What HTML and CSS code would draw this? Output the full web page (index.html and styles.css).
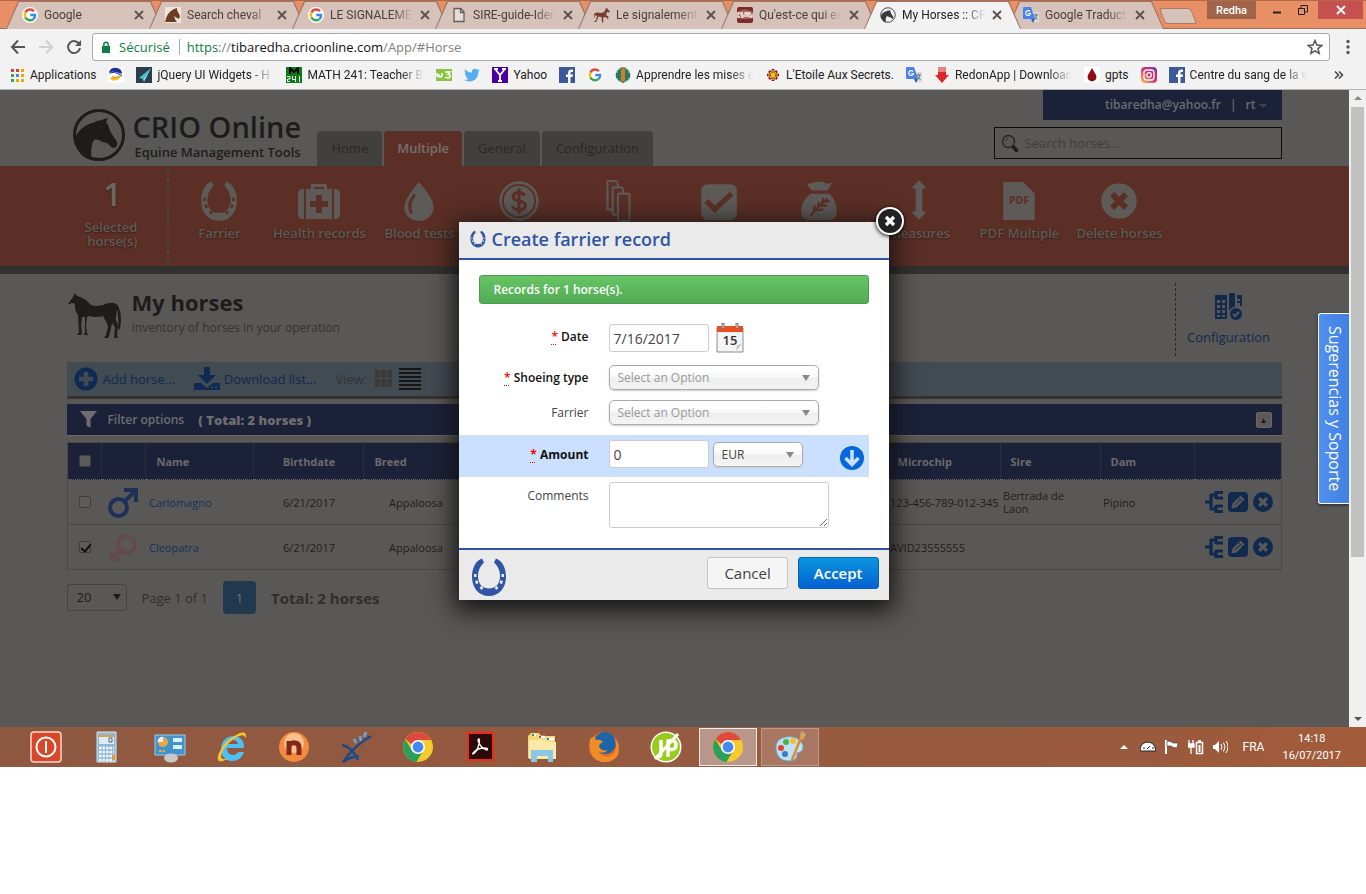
FILE: index.html
```html
<!DOCTYPE html>
<html lang="en">
<head>
<meta charset="utf-8">
<title>My Horses :: CRIO Online</title>
<link rel="stylesheet" href="styles.css">
</head>
<body>
<svg class="sprite" aria-hidden="true">
  <symbol id="google" viewBox="0 0 16 16"><circle cx="8" cy="8" r="8" fill="#fff"/><g fill="none" stroke-width="2.4"><path d="M12 4.2A5.3 5.3 0 0 0 3.4 5.4" stroke="#ea4335"/><path d="M3.4 5.4a5.4 5.4 0 0 0 0 5.2" stroke="#fbbc05"/><path d="M3.4 10.600a5.300 5.300 0 0 0 8 1.500" stroke="#34a853"/><path d="M11.400 12.100A5 5 0 0 0 13.100 8H8.200" stroke="#4285f4"/></g></symbol>
  <symbol id="translate" viewBox="0 0 16 16"><path d="M6 5h10v10H9z" fill="#dcdcdc"/><path d="M1 0h7l4 12H1a1 1 0 0 1-1-1V1a1 1 0 0 1 1-1z" fill="#4a80ef"/><path d="M8 12h4l-2 4z" fill="#2a56c6"/><path d="M7 4.500a2.400 2.400 0 1 0 .5 2H5.200" fill="none" stroke="#fff" stroke-width="1.200"/><path d="M10 8h5M12.500 6.500V8M14 8q-1 4-3.500 5M11.500 9.500l3 3.500" stroke="#66767c" fill="none"/></symbol>
  <symbol id="fb" viewBox="0 0 16 16"><path fill="#3b5998" d="M0 0h16v16H0z"/><path d="M9 16v-6H7V7.500h2V6q0-3.500 3.500-3.500H14V5h-1.300Q11.500 5 11.500 6v1.500H14L13.600 10h-2.100v6z" fill="#fff"/></symbol>
  <symbol id="chrome" viewBox="0 0 32 32"><circle cx="16" cy="16" r="15" fill="#f7c92c"/><path d="M16 1a15 15 0 0 1 13 8H16L9 13 3.500 8A15 15 0 0 1 16 1z" fill="#dd4b3e"/><path d="M3.200 8.200A15 15 0 0 0 14.500 31L21 20l-10 1z" fill="#2ca05a"/><circle cx="16" cy="16" r="7" fill="#fff"/><circle cx="16" cy="16" r="5.400" fill="#4688f1"/></symbol>
  <symbol id="horsehead" viewBox="0 0 54 54"><circle cx="27" cy="27" r="24.500" fill="none" stroke="currentColor" stroke-width="3"/><path d="M3 31C5 23 12 17 22 14.500c4-2.500 8-2 10-3.500l4-1-2 4c2 2 3 5 4 9l7 11c1 3-1 6-4 6-3-1-4-4-6-5-3-1-6-1-8-3-2 0-4-1-5 0-3 4-3 11-2.500 20C10 50 4 42 3 31z" fill="currentColor"/></symbol>
  <symbol id="shoe" viewBox="0 0 36 40"><path d="M11 1.500C4 4 1 12 1 20c0 11 7 19 17 19s17-8 17-19c0-8-3-16-10-18.500l-2 4c4 4 6 8 6 14 0 7-4 12-11 12S7 26.500 7 19.500c0-6 2-10 6-14z" fill="currentColor"/><g class="nails"><path d="M3 17h2.500v3H3zM30.500 17H33v3h-2.500zM4 24l2.500-.8 1 3L5 27zM32 24l-2.500-.8-1 3L31 27zM8.500 30.500l2-1.500 2 2-2 2zM27.500 30.500l-2-1.500-2 2 2 2z"/></g></symbol>
  <symbol id="xmark" viewBox="0 0 12 12"><path d="M2 2l8 8M10 2l-8 8" stroke="currentColor" stroke-width="1.800" fill="none"/></symbol>
  <symbol id="xcircle" viewBox="0 0 36 36"><circle cx="18" cy="18" r="18" fill="currentColor"/><path class="cut" d="M11 11l14 14M25 11L11 25" stroke-width="6"/></symbol>
  <symbol id="tree" viewBox="0 0 18 24"><path d="M0 12h6M6 4v16M5 5h6M5 19h6M11 1v8M11 15v8M18 2.500h-7M18 8h-7M18 16h-7M18 21.500h-7" stroke="currentColor" stroke-width="3.200" fill="none"/></symbol>
  <symbol id="edit" viewBox="0 0 20 20"><rect width="20" height="20" rx="4" fill="currentColor"/><path class="cutfill" d="M3.500 16.500l1-5 8-8 4 4-8 8z"/><path d="M7 13l6-6M10.500 5.500l4 4" stroke="currentColor"/></symbol>
</svg>

<div class="desktop">
<section class="browser">
  <header class="tabstrip">
    <nav class="tabs" aria-label="Open tabs">
      <div class="tab"><svg class="fav"><use href="#google"/></svg><span class="tab-title">Google</span><button class="tab-close" aria-label="Close tab"><svg><use href="#xmark"/></svg></button></div>
      <div class="tab"><svg class="fav" viewBox="0 0 16 16"><path fill="#eee4dc" d="M0 0h16v16H0z"/><path d="M0 15Q2 5 9 2l3-1v2l3 6-1 3-2-1-3-2q1 4 3 6z" fill="#6b3d24"/></svg><span class="tab-title">Search cheval</span><button class="tab-close" aria-label="Close tab"><svg><use href="#xmark"/></svg></button></div>
      <div class="tab"><svg class="fav"><use href="#google"/></svg><span class="tab-title">LE SIGNALEMENT</span><button class="tab-close" aria-label="Close tab"><svg><use href="#xmark"/></svg></button></div>
      <div class="tab"><svg class="fav" viewBox="0 0 16 16"><path d="M3 1.500h7l3 3.500v9.500H3zM9.500 1.500V5.500H13" fill="#e6dcd7" stroke="#655e5b" stroke-width="1.300"/></svg><span class="tab-title">SIRE-guide-Iden</span><button class="tab-close" aria-label="Close tab"><svg><use href="#xmark"/></svg></button></div>
      <div class="tab"><svg class="fav" viewBox="0 0 16 16"><path d="M0 15l2-2 1-4-2-1-1 4-.5-4Q1 5 4 5.500q3 1 6-.5l2-3.500L13 .5l.5 1.500L16 4.500l-1 1-2-.5-1 3 2.500 1.500-.5 3-1.500-2-2.500-.5-1 1 .5 4-1.500.5-.5-5.500-3-.5-2 5-1 .5z" fill="#793c35"/></svg><span class="tab-title">Le signalement</span><button class="tab-close" aria-label="Close tab"><svg><use href="#xmark"/></svg></button></div>
      <div class="tab"><svg class="fav" viewBox="0 0 16 16"><rect width="16" height="16" rx="2" fill="#7d2b27"/><path d="M0 5q8-5 16 0v6q-8 2-16 0z" fill="#a46a62"/><path d="M3 6H1v4h2M6 6H4v2h2v2H4M8 10V6h2v4M11 10V6h2v4h2V7" fill="none" stroke="#f6e9e5" stroke-width="1.300"/></svg><span class="tab-title">Qu'est-ce qui es</span><button class="tab-close" aria-label="Close tab"><svg><use href="#xmark"/></svg></button></div>
      <div class="tab active"><svg class="fav dark"><use href="#horsehead"/></svg><span class="tab-title">My Horses :: CR</span><button class="tab-close" aria-label="Close tab"><svg><use href="#xmark"/></svg></button></div>
      <div class="tab"><svg class="fav"><use href="#translate"/></svg><span class="tab-title">Google Traduct</span><button class="tab-close" aria-label="Close tab"><svg><use href="#xmark"/></svg></button></div>
      <button class="newtab" aria-label="New tab"></button>
    </nav>
    <div class="winctl">
      <button class="profile">Redha</button>
      <button class="wbtn" aria-label="Minimise"><svg viewBox="0 0 10 10"><path d="M1 7.500h8" stroke="#222" stroke-width="2"/></svg></button>
      <button class="wbtn" aria-label="Restore"><svg viewBox="0 0 10 10"><path d="M.5 3.500h6v6h-6zM3 3V.5h6.500V7H7" fill="none" stroke="#222"/><path d="M0 3.500h7" stroke="#222"/></svg></button>
      <button class="wclose" aria-label="Close window"><svg viewBox="0 0 12 12"><use href="#xmark"/></svg></button>
    </div>
  </header>
  <div class="toolbar">
    <button class="nav" aria-label="Back"><svg viewBox="0 0 16 16"><path d="M8 1.500L2 8l6 6.500M2 8h13" stroke="#555" stroke-width="2" fill="none"/></svg></button>
    <button class="nav" aria-label="Forward"><svg viewBox="0 0 16 16"><path d="M8 1.500L14 8l-6 6.500M14 8H1" stroke="#d0d0d0" stroke-width="2" fill="none"/></svg></button>
    <button class="nav" aria-label="Reload"><svg viewBox="0 0 16 16"><path d="M13.500 5.500A6 6 0 1 0 14 9" stroke="#555" stroke-width="2" fill="none"/><path d="M15 1v6H9z" fill="#555"/></svg></button>
    <div class="omnibox">
      <svg class="lock" viewBox="0 0 10 12"><path d="M1 5h8v7H1z" fill="#0b8043"/><path d="M2.800 5V3.500a2.200 2.200 0 0 1 4.400 0V5" fill="none" stroke="#0b8043" stroke-width="1.400"/></svg>
      <span class="secure">Sécurisé</span>
      <span class="url"><span class="green">https</span>://<b>tibaredha.crioonline.com</b>/App/#Horse</span>
      <svg class="star" viewBox="0 0 16 16"><path d="M8 1.500l1.900 4.600 4.800.4-3.700 3.100 1.200 4.800L8 11.800l-4.200 2.600L5 9.600 1.300 6.500l4.800-.4z" fill="none" stroke="#555" stroke-width="1.500"/></svg>
    </div>
    <button class="nav menu" aria-label="Menu"><svg viewBox="0 0 16 16"><g fill="#555"><circle cx="8" cy="2.500" r="1.700"/><circle cx="8" cy="8" r="1.700"/><circle cx="8" cy="13.500" r="1.700"/></g></svg></button>
  </div>
  <nav class="bookmarks" aria-label="Bookmarks">
    <a href="#"><svg class="fav" viewBox="0 0 16 16"><path d="M2 2h3v3H2zM7 2h3v3H7z" fill="#e53935"/><path d="M12 2h3v3h-3zM12 7h3v3h-3zM7 12h3v3H7zM12 12h3v3h-3z" fill="#f2a600"/><path d="M2 7h3v3H2zM2 12h3v3H2z" fill="#34a853"/><path d="M7 7h3v3H7z" fill="#4285f4"/></svg>Applications</a>
    <a href="#" aria-label="Bookmark"><svg class="fav" viewBox="0 0 16 16"><path fill="#fff" d="M0 0h16v16H0z"/><path d="M1 5Q3 0 9 1q5 1 5 6l-3-1Q7 4 1 5z" fill="#1b2fa0"/><path d="M1 6q6-2 10 1l3 2" stroke="#1b2fa0" fill="none"/><path d="M2 12q5 4 10-1l1-2q-4 4-10 1z" fill="#f4c81e"/><path d="M4 10q4 2 8-1" stroke="#e9a030" fill="none" stroke-width="2"/></svg></a>
    <a href="#" class="clip"><svg class="fav" viewBox="0 0 16 16"><path fill="#2d3c4f" d="M0 0h16v16H0z"/><path d="M15 1L3 11l4 1z" fill="#39cdb6"/><path d="M15 1L8 15l-1-3z" fill="#7fd7f5"/></svg><span>jQuery UI Widgets - H</span></a>
    <a href="#" class="clip"><svg class="fav" viewBox="0 0 16 16"><path fill="#0a7d16" d="M0 0h16v16H0z"/><path d="M4 7V1l4 4 4-4v6" stroke="#000" stroke-width="2" fill="none"/><path d="M1 9.500h3v2.500H1.500V14.500H4M6.500 9v3.500H10M9.500 9v6M13.500 9v6" stroke="#fff" fill="none"/></svg><span>MATH 241: Teacher Bi</span></a>
    <a href="#" aria-label="w3"><svg class="fav" viewBox="0 0 16 16"><path fill="#8ac53f" d="M0 2h16v12H0z"/><path d="M1 6v3q1 2 2 0V7v2q1 2 3 0V6M9 5h5l-2 2.500q3 0 2 2.500-2 2-5 0" stroke="#fff" stroke-width="1.500" fill="none"/></svg></a>
    <a href="#" aria-label="Twitter"><svg class="fav" viewBox="0 0 16 16"><path d="M0 13q3 0 4.500-1.300Q2.200 11.500 1.700 9.500h1.200Q.8 8.800.7 6.200l1.400.4Q0 5 1.200 2.200 4 5.500 8 5.600 7.500 2 11 1.800q1.300 0 2.300 1L15.300 2l-1.200 1.800 1.700-.4-1.500 1.600Q14.500 10 10.800 12.800 6 16 0 13z" fill="#55acee"/></svg></a>
    <a href="#"><svg class="fav" viewBox="0 0 16 16"><path fill="#4a00a0" d="M0 0h16v16H0z"/><path d="M3 2l5 6 5-6M8 8v6M2 2h4M10 2h4M6 14h4" stroke="#fff" stroke-width="1.800" fill="none"/></svg>Yahoo</a>
    <a href="#" aria-label="Facebook"><svg class="fav"><use href="#fb"/></svg></a>
    <a href="#" aria-label="Google"><svg class="fav"><use href="#google"/></svg></a>
    <a href="#" class="clip"><svg class="fav" viewBox="0 0 16 16"><circle cx="8" cy="8" r="7.500" fill="#58b894"/><path d="M4 3v10M12 3v10M2 6v5M14 6v5" stroke="#1f5f53" stroke-width="1.500"/><path d="M5.500 1h5v12L8 16l-2.500-3z" fill="#b08a44" stroke="#6d4c24" stroke-width=".8"/></svg><span>Apprendre les mises e</span></a>
    <a href="#"><svg class="fav" viewBox="0 0 16 16"><path d="M8 2v12M2 8h12M4 4l8 8M12 4l-8 8" stroke="#8a1010" stroke-width="2.600"/><path d="M8 3v10M3 8h10M5 5l6 6M11 5l-6 6" stroke="#f5d020" stroke-width="1.200"/></svg>L'Etoile Aux Secrets.</a>
    <a href="#" aria-label="Translate"><svg class="fav"><use href="#translate"/></svg></a>
    <a href="#" class="clip"><svg class="fav" viewBox="0 0 16 16"><path d="M4 0h8v8h3l-7 8-7-8h3z" fill="#d9272a"/><path d="M4 0h8v5H4z" fill="#e98183"/></svg><span>RedonApp | Downloac</span></a>
    <a href="#"><svg class="fav" viewBox="0 0 16 16"><path fill="#fff" d="M0 0h16v16H0z"/><path d="M8 1l4 7q2 5-4 6.500Q2 13 4 8z" fill="#8d0d12"/></svg>gpts</a>
    <a href="#" aria-label="Instagram"><svg class="fav" viewBox="0 0 16 16"><defs><linearGradient id="ig" x1="0" y1="1" x2="1" y2="0"><stop offset="0" stop-color="#fdc84b"/><stop offset=".5" stop-color="#e1306c"/><stop offset="1" stop-color="#7232bd"/></linearGradient></defs><rect width="16" height="16" rx="4" fill="url(#ig)"/><rect x="3" y="3" width="10" height="10" rx="3" fill="none" stroke="#fff" stroke-width="1.300"/><circle cx="8" cy="8" r="2.300" fill="none" stroke="#fff" stroke-width="1.300"/></svg></a>
    <a href="#" class="clip"><svg class="fav"><use href="#fb"/></svg><span>Centre du sang de la v</span></a>
    <button class="more" aria-label="More bookmarks"><svg viewBox="0 0 10 8"><path d="M1 .5L4.500 4 1 7.500M5 .5L8.500 4 5 7.500" fill="none" stroke="#444" stroke-width="1.500"/></svg></button>
  </nav>

  <div class="viewport">
    <main class="page">
      <header class="site-head wrap">
        <a class="logo" href="#"><svg class="logo-mark"><use href="#horsehead"/></svg><span><strong>CRIO Online</strong><em>Equine Management Tools</em></span></a>
        <nav class="site-tabs"><a href="#">Home</a><a href="#" class="on">Multiple</a><a href="#">General</a><a href="#">Configuration</a></nav>
        <div class="account">
          <div class="userbar"><a href="#">tibaredha@yahoo.fr</a><span>|</span><a href="#">rt <i class="caret"></i></a></div>
          <label class="search"><svg viewBox="0 0 18 18"><circle cx="7.500" cy="7.500" r="6" fill="none" stroke="#252423" stroke-width="1.400"/><path d="M4.500 7q.5-2 2.500-2.500" stroke="#252423" fill="none"/><path d="M12.500 13l3 3.500" stroke="#1e1d1c" stroke-width="3.500" stroke-linecap="round"/></svg><input type="search" placeholder="Search horses..." aria-label="Search horses"></label>
        </div>
      </header>

      <div class="ribbon"><div class="ribbon-in wrap">
        <div class="selected"><b>1</b><span>Selected<br>horse(s)</span></div>
        <a href="#"><svg viewBox="0 0 40 40"><use href="#shoe" x="2" width="36" height="40"/></svg>Farrier</a>
        <a href="#"><svg viewBox="0 0 42 40"><path d="M6 8v30H5q-5 0-5-5V13q0-5 5-5zM36 8v30h1q5 0 5-5V13q0-5-5-5zM8 8h5V3h16v5h5v30H8zM16 8h10V6H16z" fill="currentColor" fill-rule="evenodd"/><path class="cut" d="M21 14v18M12 23h18" stroke-width="6"/></svg>Health records</a>
        <a href="#"><svg viewBox="0 0 40 40"><path d="M20 2Q34 18 34 26a14 13 0 0 1-28 0Q6 18 20 2z" fill="currentColor"/><path class="cut" d="M16 14q-8 9-3 18" stroke-width="3"/></svg>Blood tests</a>
        <a href="#" aria-label="Costs"><svg viewBox="0 0 40 40"><circle cx="20" cy="20" r="17.500" fill="none" stroke="currentColor" stroke-width="2.500"/><circle cx="20" cy="20" r="14.500" fill="currentColor"/><path class="cut" d="M25.500 15q-1.500-3-5.500-3-5 0-5.500 3.500T20 20q6 1 6 4.500T20 28.500q-4.500 0-6-3.500M20 8v24" stroke-width="3"/></svg></a>
        <a href="#" aria-label="Groups"><svg viewBox="0 0 40 40"><path d="M9 29V2q0-1 1-1h7q2 0 2 6M14 33V8q0-1 1-1h7q2 0 2 6M19 14q0-1 1-1h9q1 0 1 1v24q0 1-1 1h-9q-1 0-1-1zM9 28h4M14 33h4" fill="none" stroke="currentColor" stroke-width="2"/></svg></a>
        <a href="#" aria-label="Tasks"><svg viewBox="0 0 40 40"><rect x="3" y="4" width="34" height="34" rx="6" fill="currentColor"/><path class="cut" d="M8 20l8 8 16-15" stroke-width="5"/></svg></a>
        <a href="#" aria-label="Feeding"><svg viewBox="0 0 40 40"><path d="M8 3q5 1 7-1 5-1 9 0 4 3 9 0l-5 8H13zM12 13h18q7 7 7 17 0 8-7 8H11q-8 0-8-8 0-10 9-17z" fill="currentColor"/><path class="cut" d="M12 34q7-9 16-16M15 29l1-5M19 26l1-5M23 22l1-5M18 29l6-1M22 25l6-1M26 21l4-1" stroke-width="2"/></svg></a>
        <a href="#"><svg viewBox="0 0 40 44"><path d="M20 0l8 9h-4.500v24H28l-8 9-8-9h4.500V9H12z" fill="currentColor"/></svg>Measures</a>
        <a href="#"><svg viewBox="0 0 40 40"><path d="M5 2h19l11 11v25H5z" fill="currentColor"/><text class="pdf" x="20" y="23" text-anchor="middle">PDF</text></svg>PDF Multiple</a>
        <a href="#"><svg viewBox="0 0 40 40"><use href="#xcircle" x="3" y="3" width="34" height="34"/></svg>Delete horses</a>
      </div></div>

      <section class="wrap content">
        <div class="title-row">
          <svg class="horse" viewBox="0 0 54 48"><path d="M0 11L5 4 7 0l2 3q8 2 13 8 2 2 5 2 4 0 8-1 6-3 11-2 4 1 5 5 2 5 2 12l-1 10-2-2q1-9-1-19l-1 8q-1 2 1 5l1 4-1 10 1 2h-4l1-11-3-4-1 5-2 8-1 2h-4l2-3 2-8-1-4q-2-3-4-7-7 2-14 0l-2 1-1 8 1 8 1 2h-4l1-3v-15h-3l-1 9 1 7-1 2h-4l2-3-1-17q-4-5-3-11-3-2-5 0l-5 1z" fill="currentColor"/></svg>
          <div class="title"><h1>My horses</h1><p>Inventory of horses in your operation</p></div>
          <a class="config" href="#"><svg viewBox="0 0 28 28"><path d="M0 2h12v24H0zM2 7v3h3V7zm5 0v3h3V7zM2 12v3h3v-3zm5 0v3h3v-3zM2 17v3h3v-3zm5 0v3h3v-3zM2 22v2h3v-2zm5 0v2h3v-2zM14 0h6v18h-6zM22 2h5v11h-2v-3h-3zm0 4v2h3V6z" fill="currentColor" fill-rule="evenodd"/><circle class="cutfill" cx="21" cy="21" r="7.500"/><circle cx="21" cy="21" r="6" fill="currentColor"/><path class="cut" d="M18 21l2 2 4-4" stroke-width="2"/></svg>Configuration</a>
        </div>
        <div class="actions">
          <a href="#"><svg viewBox="0 0 24 24"><circle cx="12" cy="12" r="11.500" fill="currentColor"/><path class="cut" d="M12 5v14M5 12h14" stroke-width="4.500"/></svg>Add horse...</a>
          <a href="#" class="dl"><svg viewBox="0 0 26 24"><path d="M10 0h6v8h6l-9 9-9-9h6zM0 16h7l6 5 6-5h7v7H0z" fill="currentColor"/><path class="cut" d="M17 20.500h2M21 20.500h2" stroke-width="1.500"/></svg>Download list...</a>
          <span>View:</span>
          <button aria-label="Grid view"><svg viewBox="0 0 18 18"><path d="M0 0h5v8H0zM6 0h5v8H6zM12 0h5v8h-5zM0 9h5v8H0zM6 9h5v8H6zM12 9h5v8h-5z" fill="#3c3a38"/></svg></button>
          <button class="list" aria-label="List view"><svg viewBox="0 0 22 22"><path d="M0 1h22M0 5h22M0 9h22M0 13h22M0 17h22M0 21h22" stroke="#171615" stroke-width="2"/></svg></button>
        </div>
        <div class="filter"><svg viewBox="0 0 18 18"><path d="M0 0h17l-6.500 8v9l-4-2.500V8z" fill="currentColor"/></svg><span>Filter options</span><b>( Total: 2 horses )</b><button aria-label="Collapse">▲</button></div>

        <table class="horses">
          <colgroup><col class="c1"><col class="c2"><col class="c3"><col class="c4"><col class="c5"><col><col class="c7"><col class="c8"><col class="c9"><col class="c10"></colgroup>
          <thead><tr><th><input type="checkbox" aria-label="Select all"></th><th></th><th>Name</th><th class="mid">Birthdate</th><th>Breed</th><th></th><th>Microchip</th><th>Sire</th><th>Dam</th><th></th></tr></thead>
          <tbody>
            <tr><td class="mid"><input type="checkbox" aria-label="Select Carlomagno"></td><td class="mid"><svg class="sex male" viewBox="0 0 30 30"><circle cx="10.500" cy="19.500" r="8.500" fill="none" stroke="currentColor" stroke-width="4"/><path d="M16.500 13.500L27 3M16 2h12v12" fill="none" stroke="currentColor" stroke-width="4"/></svg></td><td><a href="#">Carlomagno</a></td><td class="mid">6/21/2017</td><td class="mid">Appaloosa</td><td></td><td class="chip">123-456-789-012-345</td><td class="sire">Bertrada de Laon</td><td>Pipino</td><td><div class="ops"><a href="#" aria-label="Pedigree"><svg class="tr"><use href="#tree"/></svg></a><a href="#" aria-label="Edit"><svg><use href="#edit"/></svg></a><a href="#" aria-label="Delete"><svg><use href="#xcircle"/></svg></a></div></td></tr>
            <tr><td class="mid"><input type="checkbox" checked aria-label="Select Cleopatra"></td><td class="mid"><svg class="sex female" viewBox="0 0 30 30"><circle cx="18.500" cy="11.500" r="8.500" fill="none" stroke="currentColor" stroke-width="4"/><path d="M12.500 17.500L2.500 27.500M3 20l8 8" fill="none" stroke="currentColor" stroke-width="4"/></svg></td><td><a href="#">Cleopatra</a></td><td class="mid">6/21/2017</td><td class="mid">Appaloosa</td><td></td><td class="chip">AVID23555555</td><td></td><td></td><td><div class="ops"><a href="#" aria-label="Pedigree"><svg class="tr"><use href="#tree"/></svg></a><a href="#" aria-label="Edit"><svg><use href="#edit"/></svg></a><a href="#" aria-label="Delete"><svg><use href="#xcircle"/></svg></a></div></td></tr>
          </tbody>
        </table>

        <div class="pager"><span class="pick per"><select aria-label="Rows per page"><option>20</option></select></span><span>Page 1 of 1</span><button>1</button><b>Total: 2 horses</b></div>
      </section>

      <form class="modal" role="dialog" aria-label="Create farrier record">
        <button type="button" class="modal-x" aria-label="Close"><svg viewBox="0 0 12 12"><path d="M2 2l8 8M10 2l-8 8" stroke="#fff" stroke-width="3.200"/></svg></button>
        <h2><svg><use href="#shoe"/></svg>Create farrier record</h2>
        <div class="modal-body">
          <p class="notice">Records for 1 horse(s).</p>
          <div class="row date"><label class="req" for="date"><abbr title="Required">*</abbr> Date</label><input id="date" type="text" value="7/16/2017"><button type="button" class="cal" aria-label="Open calendar"><svg viewBox="0 0 28 30"><path d="M1 5h26v24H1z" fill="#f4f4f4" stroke="#8c8c8c"/><path d="M1 3h26v6H1z" fill="#ea4d1e"/><path d="M7 0v6M21 0v6" stroke="#777" stroke-width="3"/><path d="M7 1v4M21 1v4" stroke="#ddd"/><text x="14" y="22" text-anchor="middle">15</text><path d="M26 20l-6 8 1-5z" fill="#bbb"/></svg></button></div>
          <div class="row"><label class="req" for="shoeing"><abbr title="Required">*</abbr> Shoeing type</label><span class="pick wide"><select id="shoeing"><option>Select an Option</option></select></span></div>
          <div class="row far"><label for="farrier">Farrier</label><span class="pick wide"><select id="farrier"><option>Select an Option</option></select></span></div>
          <div class="row amount"><label class="req strong" for="amount"><abbr title="Required">*</abbr> Amount</label><input id="amount" type="text" value="0"><span class="pick cur"><select aria-label="Currency"><option>EUR</option></select></span><button type="button" class="down" aria-label="Apply to all"><svg viewBox="0 0 24 24"><circle cx="12" cy="12" r="12" fill="#0468dc"/><path d="M12 4v14M5.500 12l6.500 6.500 6.500-6.500" fill="none" stroke="#cce1ff" stroke-width="3.500"/></svg></button></div>
          <div class="row notes"><label for="comments">Comments</label><textarea id="comments"></textarea></div>
        </div>
        <footer><svg><use href="#shoe"/></svg><button type="button" class="btn">Cancel</button><button type="submit" class="btn primary">Accept</button></footer>
      </form>
      <a class="support" href="#">Sugerencias y Soporte</a>
    </main>
    <div class="scroll"><i class="up"></i><i class="thumb"></i><i class="dn"></i></div>
  </div>
</section>

<footer class="taskbar">
  <button aria-label="Power"><svg viewBox="0 0 32 32"><rect x="1" y="1" width="30" height="30" rx="3" fill="#d9472b" stroke="#f4d8d0" stroke-width="1.500"/><circle cx="16" cy="16" r="9.500" fill="none" stroke="#fff" stroke-width="2"/><path d="M16 10v12" stroke="#fff" stroke-width="2"/></svg></button>
  <button aria-label="Calculator"><svg viewBox="0 0 32 32"><path d="M5 1h19v30H5z" fill="#8db8dc" stroke="#d4e6f3"/><path d="M7 4h15v9H7z" fill="#dcebf6"/><path d="M7 4h15v2H7z" fill="#e99b3c"/><path d="M17 7h3v4h-3z" fill="none" stroke="#476a86"/><path d="M7 17h15M7 21h15M7 25h15M7 29h15" stroke="#f4f9fc" stroke-width="2.500" stroke-dasharray="2.500 1"/><path d="M20 24h3v5h-3z" fill="#ef9a30"/></svg></button>
  <button aria-label="Control panel"><svg viewBox="0 0 32 32"><path d="M1 4h30v20H1z" fill="#3f93cf" stroke="#9dcdec"/><circle cx="9" cy="11" r="5" fill="#f0a53b"/><path d="M9 11V5.500A5.500 5.500 0 0 0 3.500 11z" fill="#e7f1f8"/><path d="M19 9h9M19 16h9" stroke="#d9f1fd" stroke-width="4"/><path d="M5 20h3M9 20h2" stroke="#f0a53b" stroke-width="2"/><ellipse cx="17" cy="27" rx="7" ry="4.500" fill="#c8c8c8"/></svg></button>
  <button aria-label="Internet Explorer"><svg viewBox="0 0 32 32"><path d="M28 17H11q0 7 6 7 4 0 5-3h6q-3 9-12 9-10 0-11-12Q6 6 17 5q11 0 11 12zM11 13h11q-1-4-5-4-5 0-6 4z" fill="#4fc0f2"/><path d="M30 7Q31-2 20 4 8 10 3 22q-4 10 4 8 3-1 6-3-7 3-8-1Q5 17 19 7q9-5 10-1z" fill="#f7c32f"/></svg></button>
  <button aria-label="Notes"><svg viewBox="0 0 32 32"><circle cx="16" cy="16" r="15" fill="#f38a42"/><circle cx="16" cy="12" r="10" fill="#fbc08e"/><path d="M11 24V10M11 14q3-3 6-2 4 0 4 5v7" stroke="#842817" stroke-width="5" fill="none"/></svg></button>
  <button aria-label="Sketch"><svg viewBox="0 0 32 32"><path d="M2 14q10 2 16 15M31 5Q15 14 3 31q9-6 16-6" stroke="#17498b" stroke-width="2.500" fill="none"/><path d="M14 8l2 4M20 5l1 5M26 1l-2 5" stroke="#68a7de" stroke-width="2.500"/></svg></button>
  <button aria-label="Chrome"><svg><use href="#chrome"/></svg></button>
  <button aria-label="Acrobat Reader"><svg viewBox="0 0 32 32"><path d="M4 2h25v27H4z" fill="#2b0b0a" stroke="#ed2a13" stroke-width="2"/><path d="M15 8q-2 0 0 4 3 6 8 7 2-2-3-2-6 0-10 4-2 2-1 2 4-2 6-10 1-5 0-5z" fill="none" stroke="#fff" stroke-width="1.300"/></svg></button>
  <button aria-label="File Explorer"><svg viewBox="0 0 32 32"><path d="M2 5l3-3h8l2 3h14v22H2z" fill="#f1d779"/><path d="M6 4h4M13 6h6M21 8h7" stroke="#fff" stroke-width="2.500"/><path d="M6 4h2" stroke="#2a9d4b" stroke-width="2"/><path d="M13 6h2" stroke="#d8442a" stroke-width="2"/><path d="M21 8h2" stroke="#3a86c8" stroke-width="2"/><path d="M3 9h16l1 2h10v17H3z" fill="#f9eaa9"/><path d="M5 31V19h22v12h-5v-6H11v6z" fill="#8ac7e5"/></svg></button>
  <button aria-label="Firefox"><svg viewBox="0 0 32 32"><circle cx="16" cy="16" r="15" fill="#e7662a"/><circle cx="17" cy="12" r="11" fill="#1c65a8"/><path d="M2 8l4-3 2 4q5-1 7 2-4 2-4 5 4 5 9 3-3 4-9 2 5 7 13 3Q31 18 26 7q7 8 4 17-5 8-15 7Q-1 28 2 8z" fill="#f08b26"/></svg></button>
  <button aria-label="iP"><svg viewBox="0 0 32 32"><circle cx="16" cy="16" r="15.500" fill="#fff"/><circle cx="16" cy="16" r="14" fill="#98cb1b"/><path d="M11 9v13q0 4-4 4M18 26V10q8-2 8 4t-8 4" stroke="#fff" stroke-width="3.500" fill="none"/><path d="M28 3L5 28" stroke="#fff" stroke-width="3"/></svg></button>
  <button class="open front" aria-label="Chrome window"><svg><use href="#chrome"/></svg></button>
  <button class="open" aria-label="Paint"><svg viewBox="0 0 32 32"><path d="M2 18Q1 8 12 6q12-2 17 8 1 7-6 8 1 8-8 8Q3 30 2 18z" fill="#bfe2f3" stroke="#6ba5c6"/><circle cx="12" cy="11" r="3" fill="#4cb04e"/><circle cx="19" cy="10" r="3" fill="#f4bf2d"/><circle cx="7" cy="17" r="3" fill="#e0402d"/><circle cx="11" cy="23" r="3" fill="#3c79c8"/><path d="M28 4L18 29" stroke="#de8b32" stroke-width="2.500"/><path d="M26 7l1-7 5 3-3 6z" fill="#d5a566"/></svg></button>
  <div class="tray">
    <svg viewBox="0 0 16 16"><path d="M4 10l4-4 4 4z" fill="#fff"/></svg>
    <svg viewBox="0 0 16 16"><path d="M0 12q0-8 7-9 8 0 9 9z" fill="#fff" stroke="#222"/><path d="M3 9h2M7 10l3-3M12 9h2" stroke="#222"/></svg>
    <svg viewBox="0 0 16 16"><path d="M2 1v14" stroke="#fff" stroke-width="2"/><path d="M3 2q4 0 6 2h5l-1 5q-4 0-6-2H3z" fill="#fff" stroke="#333" stroke-width=".6"/></svg>
    <svg viewBox="0 0 16 16"><path d="M1 1v4M5 1v4M0 5h6v3H0zM3 8v7" stroke="#fff" stroke-width="1.300" fill="#fff"/><path d="M8.500 3.500h6v11h-6zM10 2h3" stroke="#fff" stroke-width="1.500" fill="none"/><path d="M10.500 6h2v7h-2z" fill="#fff"/></svg>
    <svg viewBox="0 0 16 16"><path d="M1 6h2l4-4v12l-4-4H1z" fill="#fff"/><path d="M9 5q2 3 0 6M11.500 3.500q3 4.500 0 9M14 2q4 6 0 12" stroke="#fff" fill="none"/></svg>
    <span class="lang">FRA</span>
    <span class="clock">14:18<br>16/07/2017</span>
  </div>
</footer>
</div>
</body>
</html>
```
FILE: styles.css
```css
* { box-sizing: border-box; }
body { margin: 0; background: #fff; font-family: "Open Sans", "Noto Sans", sans-serif; font-size: 12px; }
button, input, select, textarea { font: inherit; color: inherit; }
button { border: 0; background: none; padding: 0; }
a { color: inherit; text-decoration: none; }
h1, h2, p { margin: 0; }
svg { display: block; flex: none; }
.sprite { position: absolute; width: 0; height: 0; }
.fav { width: 16px; height: 16px; }

/* browser chrome */
.tabstrip { display: flex; height: 29px; justify-content: space-between; background: #e98f65; border-top: 1px solid #b5674a; border-bottom: 1px solid #a0705c; font-family: Roboto, sans-serif; }
.tabs { display: flex; flex: 1; padding-left: 6px; min-width: 0; }
.tab { position: relative; isolation: isolate; display: flex; align-items: center; flex: 0 1 157px; min-width: 0; height: 28px; margin-right: -14px; padding: 0 18px 0 16px; gap: 6px; color: #4a403c; }
.tab::before, .tab::after { content: ""; position: absolute; z-index: -1; inset: 0; background: #9c7668; clip-path: polygon(0 100%, 12px 0, calc(100% - 12px) 0, 100% 100%); }
.tab::after { inset: 1px 1px 0; background: #d6c2b8; }
.tab.active { z-index: 2; color: #222; }
.tab.active::after { background: #f2f2f2; }
.tab-title { flex: 1; overflow: hidden; white-space: nowrap; mask-image: linear-gradient(90deg, #000 75%, transparent); }
.tab-close svg { width: 12px; height: 12px; color: #5c514c; }
.dark { color: #3a3a3a; }
.newtab { width: 32px; height: 16px; margin: 7px 0 0 12px; background: #d6c2b8; border: 1px solid #a97a66; border-radius: 3px; transform: skewX(22deg); }
.winctl { display: flex; height: 18px; margin-right: 3px; gap: 16px; }
.profile { width: 49px; background: #a06448; color: #fff; font-weight: 500; font-size: 11px; }
.wbtn svg { width: 10px; height: 10px; }
.wclose { display: grid; place-items: center; width: 45px; background: #c75050; color: #fff; margin-left: -6px; }
.wclose svg { width: 12px; height: 12px; }
.toolbar { display: flex; align-items: center; gap: 12px; padding: 4px 10px 0; background: #f2f2f2; }
.nav svg { width: 16px; height: 16px; }
.menu { margin-left: -2px; }
.omnibox { flex: 1; display: flex; align-items: center; height: 28px; margin-left: -2px; padding: 0 6px 0 8px; background: #fff; border: 1px solid #a9a9a9; border-radius: 3px; font-family: "Open Sans", sans-serif; font-size: 13px; }
.lock { width: 10px; height: 12px; }
.secure { color: #0b8043; padding: 0 9px 0 8px; border-right: 1px solid #aaa; line-height: 16px; }
.url { padding-left: 7px; color: #808080; flex: 1; }
.url b { font-weight: 400; color: #111; }
.green { color: #0b8043; }
.star { width: 16px; height: 16px; }
.bookmarks { display: flex; align-items: center; gap: 12px; height: 29px; padding: 0 22px 0 9px; background: #f2f2f2; border-bottom: 1px solid #b6b6b6; font-family: Roboto, sans-serif; color: #222; white-space: nowrap; }
.bookmarks a { display: flex; align-items: center; gap: 5px; }
.clip span { width: 117px; overflow: hidden; mask-image: linear-gradient(90deg, #000 80%, transparent); }
.more { margin-left: auto; }
.more svg { width: 10px; height: 8px; }

/* web page behind the dialog */
.viewport { display: flex; }
.page { --bg: #5a5856; position: relative; flex: 1; min-width: 0; background: #5a5856; color: #2b2928; overflow: hidden; }
.wrap { width: 90%; margin: 0 auto; }
.cut { fill: none; stroke: var(--bg); }
.cutfill { fill: var(--bg); }
.nails { fill: var(--bg); }
.site-head { display: flex; align-items: flex-end; height: 76px; }
.logo { display: flex; align-items: center; gap: 6px; width: 250px; padding: 0 0 4px 5px; color: #1d1c1b; }
.logo-mark { width: 54px; height: 54px; }
.logo strong { display: block; font-weight: 600; font-size: 29px; line-height: 34px; white-space: nowrap; }
.logo em { display: block; font-style: normal; font-weight: 600; font-size: 13px; line-height: 16px; padding-left: 2px; white-space: nowrap; }
.site-tabs { display: flex; gap: 2px; flex: 1; align-items: flex-end; font-size: 13px; }
.site-tabs a { padding: 0 14px; line-height: 35px; background: #41403e; color: #2a2827; border-radius: 4px 4px 0 0; }
.site-tabs .on { background: #5b2f25; color: #77706d; font-weight: 600; padding: 0 13px; }
.account { align-self: flex-start; display: flex; flex-direction: column; align-items: flex-end; gap: 7px; }
.userbar { display: flex; gap: 9px; justify-content: flex-end; width: 239px; padding-right: 15px; line-height: 30px; background: #1b2139; color: #6d6c70; font-weight: 600; }
.caret { display: inline-block; border: 4px solid transparent; border-top-color: #3c4255; border-bottom: 0; vertical-align: middle; }
.search { display: flex; align-items: center; gap: 4px; width: 288px; height: 32px; padding: 0 6px; border: 1px solid #0c0b0b; }
.search svg { width: 18px; height: 18px; }
.search input { flex: 1; min-width: 0; border: 0; background: none; outline: 0; font-size: 13px; }
.search input::placeholder { color: #403e3d; opacity: 1; }

.ribbon { --bg: #5b2f25; background: #5b2f25; border-bottom: 8px solid #333130; color: #5d5a58; }
.ribbon-in { display: flex; height: 100px; font-weight: 600; font-size: 13px; line-height: 15px; text-shadow: 0 1px 2px #3a1d16; }
.ribbon a { width: 100px; flex: 0 1 100px; display: flex; flex-direction: column; align-items: center; gap: 4px; padding-top: 14px; color: #5d5a58; white-space: nowrap; }
.ribbon svg { width: 42px; height: 42px; }
.selected { width: 102px; flex: none; padding: 10px 30px 0 0; text-align: right; border-right: 2px dashed #484544; }
.selected b { display: block; padding-right: 16px; font-size: 32px; font-weight: 600; line-height: 36px; margin-bottom: 8px; color: #6b6866; }
.selected span { display: block; line-height: 14px; }
.pdf { font: 700 10px "Open Sans", sans-serif; fill: #5b2f25; text-shadow: none; }

.content { padding-bottom: 113px; }
.title-row { display: flex; height: 88px; padding-top: 9px; }
.horse { width: 54px; height: 48px; margin: 10px 9px 0 1px; color: #1e1d1c; }
.title { flex: 1; }
.title h1 { font-weight: 700; font-size: 22px; line-height: 32px; padding-top: 3px; color: #1d1c1b; }
.title p { line-height: 20px; color: #353230; }
.config { display: flex; flex-direction: column; align-items: center; gap: 7px; width: 107px; height: 73px; padding-top: 10px; border-left: 1px dashed #2b2a29; color: #12294d; font-size: 13px; }
.config svg { width: 28px; height: 28px; }
.actions { --bg: #424a52; display: flex; align-items: center; height: 37px; padding: 0 7px; gap: 6px; background: #424a52; border-bottom: 3px solid #353331; color: #343537; font-size: 13px; }
.actions a { display: flex; align-items: center; gap: 4px; margin-right: 13px; color: #0f2b54; }
.actions svg { width: 24px; height: 24px; }
.actions .dl svg { width: 26px; }
.actions button svg { width: 18px; height: 18px; }
.actions span { margin-right: 2px; }
.actions .list svg { width: 22px; height: 22px; }
.filter { display: flex; align-items: center; height: 32px; margin-top: 5px; padding: 0 10px 0 13px; background: #1b2139; border-bottom: 1px solid #6b6967; color: #6f6d70; font-weight: 600; font-size: 12px; }
.filter svg { width: 18px; height: 18px; margin-right: 9px; }
.filter b { flex: 1; margin-left: 14px; font-size: 13px; }
.filter button { width: 16px; height: 16px; border: 1px solid #6a6866; border-radius: 2px; background: #5b5957; color: #1b1a19; font-size: 8px; line-height: 8px; }

.horses { width: 100%; margin-top: 6px; border-collapse: collapse; table-layout: fixed; border: 1px solid #4b4947; font-size: 11px; line-height: 13px; color: #1f1d1c; }
.c1 { width: 34px; } .c2 { width: 44px; } .c3 { width: 108px; } .c4 { width: 110px; } .c5 { width: 104px; } .c7 { width: 113px; } .c8 { width: 100px; } .c9 { width: 94px; } .c10 { width: 87px; }
.horses th { height: 37px; padding: 0 10px; text-align: left; background: #1b2139; color: #6d6b6d; border-right: 1px dotted #3a3c44; border-bottom: 1px dotted #6a6866; font-size: 11px; font-weight: 700; }
.horses td { height: 45px; padding: 0 3px; border-bottom: 1px solid #4b4947; }
.horses .mid { text-align: center; }
.horses .chip { padding-right: 0; white-space: nowrap; }
.horses .sire { padding-right: 12px; }
.horses td a { color: #14305f; }
.horses td .ops a { color: #10294e; }
.horses input { appearance: none; position: relative; display: block; width: 12px; height: 12px; margin: 0 auto; border: 1px solid #403e3d; border-radius: 2px; background: #5e5c5a; }
.horses input:checked::after { content: ""; position: absolute; left: 3px; top: 0; width: 4px; height: 8px; border: solid #111; border-width: 0 2px 2px 0; transform: rotate(40deg); }
.sex { width: 30px; height: 30px; margin: 2px 3px 0; }
.male { color: #1d3158; } .female { color: #64484c; }
.ops { display: flex; gap: 5px; justify-content: flex-end; align-items: center; padding-right: 5px; }
.ops svg { width: 20px; height: 20px; }
.ops .tr { width: 18px; height: 24px; }
.pager { display: flex; align-items: center; margin-top: 11px; color: #302e2c; font-size: 13px; }
.pager button { width: 33px; height: 33px; margin: 0 15px; background: #20394e; color: #6f747a; border-radius: 4px; }
.pager b { font-size: 15px; }

.pick { position: relative; display: block; }
.pick select { appearance: none; width: 100%; height: 25px; padding: 0 8px; border: 1px solid #aaa; border-radius: 5px; background: linear-gradient(#fff 20%, #f6f6f6 50%, #eee 52%, #f4f4f4); box-shadow: 0 1px 2px #ccc; color: #999; line-height: 23px; font-size: 12px; }
.pick::after { content: ""; position: absolute; right: 9px; top: 10px; border: 4px solid transparent; border-top: 6px solid #888; border-bottom: 0; }
.pick.per { width: 60px; margin-right: 14px; }
.pick.per select { height: 27px; background: #5a5856; border-color: #454342; border-radius: 3px; color: #1e1d1c; box-shadow: none; font-size: 13px; }
.pick.per::after { right: 6px; border-top-color: #1c1b1a; }
.wide { width: 210px; }
.cur { width: 90px; margin-left: 4px; }
.pick.cur select { color: #444; }

/* dialog */
.modal { --bg: #eaeaea; position: absolute; top: 132px; left: 50%; width: 430px; margin-left: -216px; background: #fff; color: #444; box-shadow: 0 6px 24px 4px #111; }
.modal-x { position: absolute; right: -15px; top: -15px; display: grid; place-items: center; width: 28px; height: 28px; border: 2px solid #fff; border-radius: 50%; background: #222; box-shadow: 0 1px 4px #000; }
.modal-x svg { width: 12px; height: 12px; }
.modal h2 { display: flex; align-items: center; gap: 6px; height: 38px; padding: 0 0 2px 11px; background: #eaeaea; border-bottom: 2px solid #2f55a4; color: #2f55a4; font-size: 18px; font-weight: 600; }
.modal h2 svg { width: 16px; height: 18px; }
.modal-body { padding: 15px 20px 20px 0; }
.notice { margin-left: 20px; height: 29px; padding-left: 14px; line-height: 27px; border: 1px solid #4b9c50; border-radius: 3px; background: linear-gradient(#66c564, #53ab55); color: #fff; font-weight: 600; }
.row { display: flex; align-items: center; }
.row label { width: 130px; margin-right: 20px; text-align: right; font-size: 12px; }
.row .req { color: #111; font-weight: 600; }
.row .strong { font-weight: 700; }
.row abbr { color: #f00; text-decoration: underline dotted #e00; text-underline-offset: 3px; }
.row input { width: 100px; height: 28px; padding: 0 4px; border: 1px solid #ccc; border-radius: 3px; font-size: 14px; background: #fff; }
.date { padding-top: 18px; height: 50px; }
.date label, .amount label { padding-bottom: 4px; }
.cal { margin-left: 7px; }
.cal svg { width: 28px; height: 30px; }
.cal text { font: 600 13px "Open Sans", sans-serif; fill: #333; }
.date + .row { margin-top: 11px; }
.far { margin-top: 10px; }
.amount { height: 42px; margin-top: 10px; background: #cbe0fe; }
.amount input { margin-bottom: 4px; }
.cur { margin-bottom: 4px; }
.down { margin: 4px 5px 0 auto; }
.down svg { width: 24px; height: 24px; }
.notes { align-items: flex-start; padding-top: 5px; }
.notes label { line-height: 28px; }
.notes textarea { width: 220px; height: 46px; border: 1px solid #ccc; border-radius: 3px; background: #fff; }
.modal footer { display: flex; align-items: flex-start; gap: 10px; height: 52px; padding: 7px 10px 0 12px; border-top: 2px solid #2f55a4; background: #eaeaea; color: #2f55a4; }
.modal footer svg { width: 36px; height: 40px; margin-right: auto; }
.btn { height: 32px; padding: 0 16px; border: 1px solid #c4c4c4; border-radius: 3px; background: #f5f5f5; color: #444; font-size: 15px; }
.btn.primary { padding: 0 15px; border-color: #0560b8; background: linear-gradient(#0a96de, #0560d2); color: #fff; font-weight: 600; }
.support { position: absolute; right: 0; top: 223px; width: 31px; height: 191px; writing-mode: vertical-rl; text-align: center; line-height: 29px; border: 1px solid #fff; border-right: 0; border-radius: 3px 0 0 3px; background: linear-gradient(90deg, #5190f0, #4080e2); color: #fff; font-size: 16px; box-shadow: 0 1px 3px #222; }
.scroll { width: 17px; background: #f0f0f0; display: flex; flex-direction: column; align-items: center; padding: 6px 0; }
.up, .dn { border: 4px solid transparent; border-bottom: 4px solid #888; border-top: 0; }
.dn { border-bottom: 0; border-top: 4px solid #555; margin-top: auto; }
.thumb { width: 13px; height: 72%; margin-top: 7px; background: #c1c1c1; }

/* taskbar */
.taskbar { display: flex; align-items: center; gap: 4px; height: 40px; padding-left: 17px; background: linear-gradient(90deg, #8e5840, #975b40 60%, #9a5a3d 85%, #a35c3a); }
.taskbar button { width: 58px; height: 38px; display: grid; place-items: center; }
.taskbar button svg { width: 32px; height: 32px; }
.taskbar .open { border: 1px solid #bf9a88; background: #a97661; }
.taskbar .front { border-color: #f3ebe6; background: #b9978a; }
.tray { margin-left: auto; display: flex; align-items: center; gap: 8px; padding-right: 25px; color: #fff; font-family: Roboto, sans-serif; }
.tray svg { width: 16px; height: 16px; }
.lang { padding: 0 10px 0 7px; }
.clock { text-align: center; font-size: 11px; line-height: 17px; }
```
